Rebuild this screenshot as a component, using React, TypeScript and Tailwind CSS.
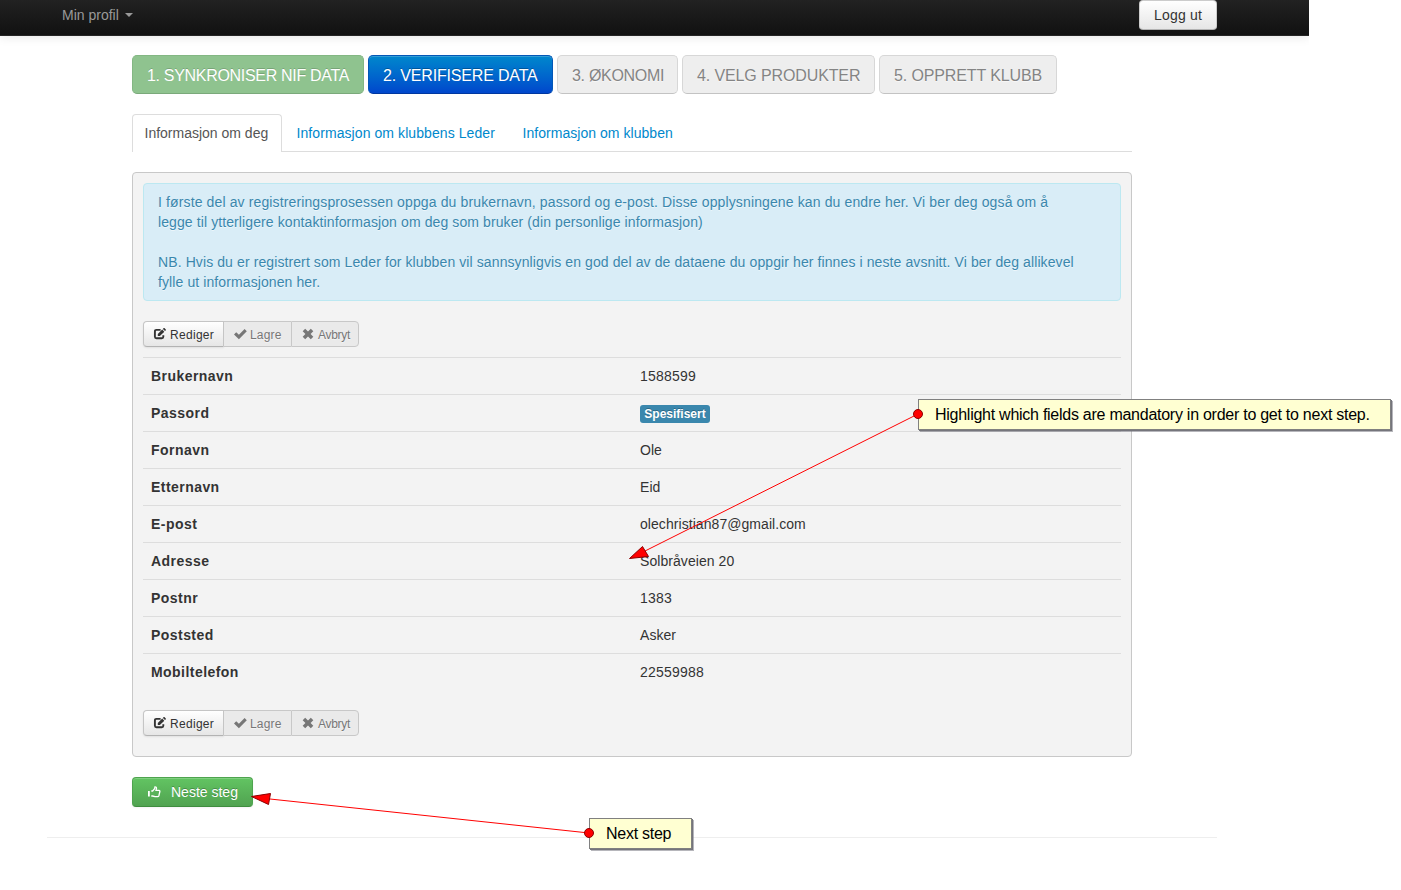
import { clsx } from "clsx";

const steps = [
  {
    label: "1. SYNKRONISER NIF DATA",
    width: "w-[232px] tracking-[-0.31px]",
    tone: "bg-[#8fc38f] border-[#83b783] border-b-[#7aa97a] text-white [text-shadow:0_-1px_0_rgba(0,0,0,0.16)]",
  },
  {
    label: "2. VERIFISERE DATA",
    width: "w-[185px] tracking-[-0.17px]",
    tone: "bg-linear-to-b from-[#0088cc] to-[#0044cc] bg-origin-border border-[#0357b6] border-b-[#00379f] text-white [text-shadow:0_-1px_0_rgba(0,0,0,0.25)] shadow-[inset_0_1px_0_rgba(255,255,255,0.2)]",
  },
  { label: "3. ØKONOMI", width: "w-[121px] tracking-[-0.3px]", tone: "" },
  { label: "4. VELG PRODUKTER", width: "w-[193px] tracking-[-0.12px]", tone: "" },
  { label: "5. OPPRETT KLUBB", width: "w-[178px] tracking-[-0.12px]", tone: "" },
];

const fields = [
  { label: "Brukernavn", value: "1588599" },
  { label: "Passord", value: "Spesifisert", badge: true },
  { label: "Fornavn", value: "Ole" },
  { label: "Etternavn", value: "Eid" },
  { label: "E-post", value: "olechristian87@gmail.com" },
  { label: "Adresse", value: "Solbråveien 20" },
  { label: "Postnr", value: "1383" },
  { label: "Poststed", value: "Asker" },
  { label: "Mobiltelefon", value: "22559988" },
];

function EditIcon() {
  return (
    <svg viewBox="0 0 14 12" className="h-3 w-3.5" fill="none">
      <path d="M7.6 1.9H3.4Q1.9 1.9 1.9 3.4V8.8Q1.9 10.3 3.4 10.3H8.8Q10.3 10.3 10.3 8.8V7.2" stroke="currentColor" strokeWidth="1.9" />
      <path d="M4.8 8.1V6L9.2 1.6L11.3 3.7L6.9 8.1ZM9.9 .9L10.7 .1Q11 -.2 11.4 .1L12.8 1.5Q13.1 1.9 12.8 2.2L12 3Z" fill="currentColor" />
    </svg>
  );
}

function CheckIcon() {
  return (
    <svg viewBox="0 0 13 12" className="h-3 w-[13px]" fill="currentColor">
      <path d="M0 6.4L2.2 4.2L4.9 6.8L10.6 1L12.8 3.2L4.9 11.2Z" />
    </svg>
  );
}

function RemoveIcon() {
  return (
    <svg viewBox="0 0 12 12" className="size-3" fill="currentColor">
      <path d="M.7 3.2L3.2 .8L6 3.4L8.8 .8L11.3 3.2L8.6 6L11.3 8.8L8.8 11.2L6 8.6L3.2 11.2L.7 8.8L3.4 6Z" />
    </svg>
  );
}

function ThumbIcon() {
  return (
    <svg viewBox="0 0 13 12" className="h-3 w-[13px]" fill="none" stroke="currentColor" strokeWidth="1.3">
      <path d="M.9 5V10.4" strokeWidth="1.8" />
      <path d="M3.3 5H4.6L6.6 2.8L7 .8Q8.5 .7 8.5 2.3L8 4.3H11Q12 4.4 11.9 5.5L10.9 9.7Q10.6 10.6 9.7 10.6H7L4.6 10H3.3" />
    </svg>
  );
}

function ButtonGroup() {
  const disabled =
    "border-[#c8c8c8] bg-[#eaeaea] text-[#777] [text-shadow:0_1px_1px_rgba(255,255,255,0.6)]";
  return (
    <div className="flex h-[26px] text-[12px] leading-5">
      <div className="flex w-[81px] items-center gap-0.5 rounded-l border border-[#c5c5c5] border-b-[#b3b3b3] bg-linear-to-b from-white to-[#e6e6e6] pl-[9px] text-[#333] shadow-[0_1px_2px_rgba(0,0,0,0.08)]">
        <EditIcon />
        <span className="pt-0.5 pl-px tracking-[0.3px]">Rediger</span>
      </div>
      <div className={clsx("flex w-[67px] items-center gap-[3px] border-y pl-2.5", disabled)}>
        <CheckIcon />
        <span className="pt-0.5 tracking-[0.2px]">Lagre</span>
      </div>
      <div className={clsx("flex w-[68px] items-center gap-1 rounded-r border pl-2.5", disabled)}>
        <RemoveIcon />
        <span className="pt-0.5 tracking-[-0.3px]">Avbryt</span>
      </div>
    </div>
  );
}

function Note({ text, className }: { text: string; className: string }) {
  return (
    <div
      className={clsx(
        "absolute flex h-[31px] items-center border border-[#808080] bg-[#ffffd2] pl-4 text-[16px] tracking-[-0.26px] whitespace-nowrap text-black shadow-[1px_1px_0_#75757c,2px_2px_0_rgba(110,110,120,0.5)]",
        className,
      )}
    >
      {text}
    </div>
  );
}

export default function App() {
  return (
    <div className="relative h-[890px] w-[1401px] overflow-hidden bg-white font-['Liberation_Sans',Arial,sans-serif] text-[14px] leading-5 text-[#333]">
      {/* Navbar */}
      <header className="flex h-9 w-[1309px] items-start justify-between border-b border-[#252525] bg-linear-to-b from-[#222] to-[#111] pr-[92px] pl-[62px] shadow-[0_1px_10px_rgba(0,0,0,0.1)] [clip-path:inset(0_0_-12px_0)]">
        <div className="flex items-center gap-1.5 pt-[5px] text-[#999]">
          <span>Min profil</span>
          <span className="border-x-4 border-t-4 border-x-transparent border-t-[#999]" />
        </div>
        <button className="h-[30px] w-[78px] rounded border border-[#ccc] border-b-[#b3b3b3] bg-linear-to-b from-white to-[#e6e6e6] tracking-[0.2px] text-[#333]">
          Logg ut
        </button>
      </header>

      <main className="ml-[132px] w-[1000px] pt-[19px]">
        {/* Wizard steps */}
        <div className="flex gap-1">
          {steps.map((step) => (
            <div
              key={step.label}
              className={clsx(
                "flex h-[39px] items-center rounded-[5px] border pt-0.5 pl-3.5 text-[16px] whitespace-nowrap",
                step.width,
                step.tone ||
                  "border-[#d7d7d7] border-b-[#c3c3c3] bg-[#eeeeee] text-[#848484] [text-shadow:0_1px_1px_rgba(255,255,255,0.65)]",
              )}
            >
              {step.label}
            </div>
          ))}
        </div>

        {/* Tabs */}
        <nav className="mt-5 flex h-[38px] border-b border-[#ddd] text-[#0088cc]">
          <div className="h-[38px] w-[150px] rounded-t border border-b-0 border-[#ddd] bg-white pt-2 pl-[11.5px] text-[#555]">
            Informasjon om deg
          </div>
          <div className="w-[226px] pt-[9px] pl-[14.5px] tracking-[0.08px]">Informasjon om klubbens Leder</div>
          <div className="pt-[9px] pl-[14.5px] tracking-[0.04px]">Informasjon om klubben</div>
        </nav>

        {/* Form panel */}
        <section className="mt-5 h-[585px] rounded border border-[#c8c8c8] bg-[#f3f3f3] p-2.5">
          <div className="h-[118px] rounded border border-[#bce8f1] bg-[#d9edf7] pt-2 pl-3.5 tracking-[0.1px] whitespace-nowrap text-[#3a87ad] [text-shadow:0_1px_0_rgba(255,255,255,0.5)]">
            <p>
              <span className="tracking-[0.126px]">
                I første del av registreringsprosessen oppga du brukernavn, passord og e-post. Disse opplysningene kan du endre her. Vi ber deg også om å
              </span>
              <br />
              legge til ytterligere kontaktinformasjon om deg som bruker (din personlige informasjon)
            </p>
            <p className="mt-5">
              NB. Hvis du er registrert som Leder for klubben vil sannsynligvis en god del av de dataene du oppgir her finnes i neste avsnitt. Vi ber deg allikevel
              <br />
              fylle ut informasjonen her.
            </p>
          </div>

          <div className="mt-5 mb-2.5">
            <ButtonGroup />
          </div>

          {fields.map((field) => (
            <div key={field.label} className="grid h-[37px] grid-cols-2 border-t border-[#ddd] px-2 pt-2">
              <b className="tracking-[0.45px]">{field.label}</b>
              {field.badge ? (
                <span className="mt-0.5 ml-2 h-[18px] w-[70px] self-start rounded-[3px] bg-[#3a87ad] text-center text-[12px] leading-[18px] font-bold text-white [text-shadow:0_-1px_0_rgba(0,0,0,0.25)]">
                  {field.value}
                </span>
              ) : (
                <span className={clsx("pl-2", /^\d+$/.test(field.value) ? "tracking-[0.22px]" : "tracking-[0.06px]")}>
                  {field.value}
                </span>
              )}
            </div>
          ))}

          <div className="mt-5">
            <ButtonGroup />
          </div>
        </section>

        <button className="mt-5 flex h-[30px] w-[121px] items-center rounded border border-[#4ea44e] border-b-[#3f8d3f] bg-linear-to-b from-[#62c462] to-[#51a351] pl-[15px] text-white shadow-[inset_0_1px_0_rgba(255,255,255,0.2),0_1px_2px_rgba(0,0,0,0.05)] [text-shadow:0_-1px_0_rgba(0,0,0,0.25)]">
          <ThumbIcon />
          <span className="pl-2.5">Neste steg</span>
        </button>
      </main>

      <hr className="mt-[30px] ml-[47px] w-[1170px] border-[#eee]" />

      {/* Review notes and their arrows, on top of the page */}
      <Note text="Highlight which fields are mandatory in order to get to next step." className="top-[399px] left-[918px] w-[473px]" />
      <Note text="Next step" className="top-[818px] left-[589px] w-[103px]" />
      <svg className="absolute inset-0" width="1401" height="890" fill="#f00" stroke="#f00">
        <path d="M918 414L645 551M589 833L270 799" fill="none" />
        <g stroke="#8b0000">
          <path d="M629.500 558.500L642.500 546.500L648.500 556.500Z" />
          <path d="M251.500 796.500L270.500 793.500L268.500 804.500Z" />
          <circle cx="918" cy="414" r="4.500" />
          <circle cx="589" cy="833" r="4.500" />
        </g>
      </svg>
    </div>
  );
}
